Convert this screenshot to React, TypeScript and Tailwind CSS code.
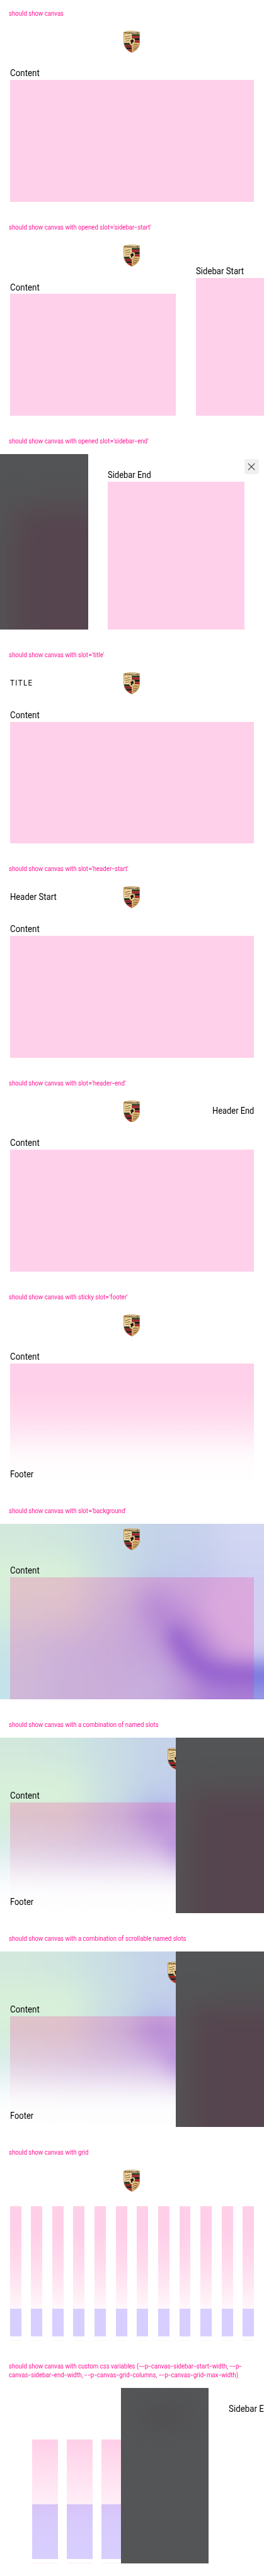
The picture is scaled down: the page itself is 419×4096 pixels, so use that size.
import type { ReactNode } from "react";

function Crest() {
  return (
    <svg viewBox="0 0 30 40" className="block h-[40px] w-[30px] shrink-0" aria-hidden="true">
      <defs>
        <linearGradient id="gold" x1="0" y1="0" x2="1" y2="1">
          <stop offset="0" stopColor="#d9b878" />
          <stop offset=".35" stopColor="#f8dfae" />
          <stop offset=".7" stopColor="#e3b878" />
          <stop offset="1" stopColor="#9a6c34" />
        </linearGradient>
        <clipPath id="shield">
          <path d="M.9 2.9Q15 -1.6 29.1 2.9L28.9 21.5C28.7 29.5 22.5 36.2 15 39.3C7.5 36.2 1.3 29.5 1.1 21.5Z" />
        </clipPath>
      </defs>
      <path d="M0 2.2Q15 -2.2 30 2.2L29.7 21.5C29.5 30.5 23 37 15 40C7 37 .5 30.5 .3 21.5Z" fill="#b08a54" />
      <g clipPath="url(#shield)">
        <rect width="30" height="40" fill="url(#gold)" />
        <rect x="15" y="6.3" width="15" height="3" fill="#233321" />
        <rect x="15" y="9.3" width="15" height="4" fill="#a0262a" />
        <rect x="15" y="13.4" width="15" height="4.2" fill="#1b1c22" />
        <rect x="15" y="17.6" width="15" height="4" fill="#a0262a" />
        <rect x="0" y="22" width="15" height="4.2" fill="#24302a" />
        <rect x="0" y="26.2" width="15" height="3.8" fill="#941f21" />
        <rect x="0" y="30" width="15" height="3.8" fill="#1b1a22" />
        <rect x="0" y="33.8" width="15" height="6" fill="#a8282a" />
        <path d="M15 9.4H30M15 17.6H30M0 26.2H15M0 30H15M15 22V40" stroke="#c9825a" strokeWidth=".35" />
        <g fill="none" stroke="#4a3519" strokeWidth="1">
          <path d="M3 11.2C6 12 9 8.8 13 9.2" />
          <path d="M3.2 15C6 15.8 8.6 12.8 12.4 13.4" />
          <path d="M3.6 19C6 19.6 7.6 17 10.4 17.6" />
          <path d="M17 27.5C19 24.6 22 24.4 25.4 26" />
          <path d="M17 31.5C19 28.6 21.6 28.4 25 30" />
          <path d="M17 35.4C18.6 32.8 20.6 32.2 23.2 33.2" />
        </g>
        <path d="M9.9 14.8Q15.4 12.6 20.6 14.8V20.2C20.4 23.6 18 26 15.3 27C12.5 26 10.1 23.6 9.9 20.2Z" fill="#efcf92" stroke="#a67a40" strokeWidth=".5" />
        <path d="M12.8 23.6L14.2 20.8L12.4 18.6L13 17L14.6 17.6L15 15.6L16.4 15.2L17 17L19 16.4L18 18.4L18.8 20.2L17.2 21.6L16.8 20.4L15.8 22.2L16.4 24.2L14.8 23.2Z" fill="#17130f" />
      </g>
      <text x="2" y="5.6" textLength="26" lengthAdjust="spacingAndGlyphs" fontSize="4.2" fontWeight="600" fontFamily="Roboto, sans-serif" fill="#4a3519">PORSCHE</text>
    </svg>
  );
}

function Text({ children, fit = "origin-left scale-x-[.9]" }: { children: ReactNode; fit?: string }) {
  return <p className={`text-[17px] leading-[24px] whitespace-nowrap text-[#010205] ${fit}`}>{children}</p>;
}

/* Hyphens and equals signs are set wider than the font's own. */
function LabelLine({ text }: { text: string }) {
  return (
    <span className="block">
      {text.split(/([-=])/).map((part, i) => {
        if (part === "-") {
          return <span key={i} className="inline-block w-[5.95px] origin-left scale-x-[1.7]">-</span>;
        }
        if (part === "=") {
          return <span key={i} className="inline-block w-[7.6px] origin-left scale-x-[1.12]">=</span>;
        }
        return part;
      })}
    </span>
  );
}

function Story({ label, children }: { label: string[]; children: ReactNode }) {
  return (
    <section className="pt-[17px] pb-[22px]">
      <h2 className="mb-[15px] ml-[16px] w-[450px] origin-left scale-x-[.922] text-[12px] leading-[16px] whitespace-nowrap text-[#ff1493]">
        {label.map((line) => (
          <LabelLine key={line} text={line} />
        ))}
      </h2>
      <div className="relative flex h-[320px] overflow-hidden">{children}</div>
    </section>
  );
}

function Header({ start, end }: { start?: ReactNode; end?: ReactNode }) {
  return (
    <header className="grid h-[40px] grid-cols-[1fr_30px_1fr] items-center px-[18px]">
      <div className="justify-self-start">{start}</div>
      <Crest />
      <div className="justify-self-end">{end}</div>
    </header>
  );
}

function Fill() {
  return <div className="flex-1 bg-[#ff149333]" />;
}

function Main({ start, end }: { start?: ReactNode; end?: ReactNode }) {
  return (
    <div className="relative flex flex-1 flex-col pt-[8px]">
      <Header start={start} end={end} />
      <div className="flex flex-1 flex-col px-[18px] pt-[26px]">
        <Text>Content</Text>
        <Fill />
      </div>
    </div>
  );
}

function Footer() {
  return (
    <footer className="absolute inset-x-0 bottom-0 flex h-[176px] items-end bg-[linear-gradient(to_bottom,#fff0_0%,#ffffff40_28%,#ffffff80_45%,#ffffffb8_58%,#ffffffe6_71%,#fffffff7_82%,#fff_100%)] px-[18px] pb-[8px]">
      <Text fit="origin-left scale-x-[.87]">Footer</Text>
    </footer>
  );
}

function Backdrop() {
  return (
    <aside className="relative w-[160px] shrink-0 overflow-hidden bg-[#535456]">
      <div className="absolute top-[98px] left-[24px] h-[350px] w-[260px] bg-[#56454e] blur-[26px]" />
    </aside>
  );
}

const MESH = [
  ["#d2e8dd", "#cfe5df", "#c9dde4", "#c4d3e8", "#c7d1ec", "#d2d6f3"],
  ["#d9f2d8", "#d9f2d8", "#cbe0e2", "#c1d0ea", "#c3caee", "#ced2f2"],
  ["#d4eddb", "#d6eadb", "#c3d7e6", "#b7c1ea", "#c4c4ee", "#d2d0f2"],
  ["#c8e3e6", "#c1d8ea", "#bcd0ea", "#b4c3ec", "#a9a8e8", "#d4cef2"],
  ["#c3e2ea", "#bed8ed", "#bed4ec", "#b9d5f2", "#a8aeea", "#9499e6"],
];

function Aurora() {
  return (
    <svg viewBox="0 0 480 320" preserveAspectRatio="none" className="absolute inset-0 h-full w-full" aria-hidden="true">
      <defs>
        <filter id="soft" filterUnits="userSpaceOnUse" x="-160" y="-160" width="800" height="640" colorInterpolationFilters="sRGB">
          <feGaussianBlur stdDeviation="28" />
        </filter>
        <filter id="band" filterUnits="userSpaceOnUse" x="-160" y="-160" width="800" height="640" colorInterpolationFilters="sRGB">
          <feGaussianBlur stdDeviation="15" />
        </filter>
        <filter id="haze" filterUnits="userSpaceOnUse" x="-160" y="-160" width="800" height="640" colorInterpolationFilters="sRGB">
          <feGaussianBlur stdDeviation="24" />
        </filter>
      </defs>
      <g filter="url(#soft)">
        {MESH.map((row, r) =>
          row.map((fill, c) => {
            const left = c === 0 ? -120 : c * 80;
            const right = c === 5 ? 600 : (c + 1) * 80;
            const top = r === 0 ? -120 : r * 64;
            const bottom = r === 4 ? 440 : (r + 1) * 64;
            return <rect key={`${r}-${c}`} x={left} y={top} width={right - left + 1} height={bottom - top + 1} fill={fill} />;
          }),
        )}
      </g>
      <path d="M285 150C310 170 330 205 350 235" fill="none" stroke="#9088e2" strokeWidth="60" strokeLinecap="round" opacity=".5" filter="url(#haze)" />
      <g filter="url(#band)">
        <path d="M345 250C370 285 420 290 560 285V420H400Z" fill="#9599e6" opacity=".85" />
        <path d="M322 192C334 212 342 232 362 246C392 266 430 270 560 264L560 286C440 290 380 290 350 262C332 246 322 222 312 200Z" fill="#7974de" stroke="#7974de" strokeWidth="14" />
        <path d="M370 140C375 190 402 216 430 219C460 221 500 213 560 208V110H400Z" fill="#d3cef1" opacity=".7" />
      </g>
    </svg>
  );
}

function Combination({ label }: { label: string }) {
  return (
    <Story label={[label]}>
      <Aurora />
      <div className="relative flex w-[320px] shrink-0 flex-col overflow-hidden pt-[18px]">
        <div className="pl-[305px]">
          <Crest />
        </div>
        <div className="flex flex-1 flex-col pt-[36px] pl-[18px]">
          <Text>Content</Text>
          <Fill />
        </div>
        <Footer />
      </div>
      <Backdrop />
    </Story>
  );
}

function Tiles({ count, className }: { count: number; className: string }) {
  return Array.from({ length: count }, (_, i) => <div key={i} className={className} />);
}

export default function App() {
  return (
    <main className="w-[480.3px] overflow-hidden bg-white font-['Roboto','Liberation_Sans',sans-serif] [zoom:0.87223]">
      <Story label={["should show canvas"]}>
        <Main />
      </Story>

      <Story label={["should show canvas with opened slot='sidebar-start'"]}>
        <div className="flex w-[320px] shrink-0 flex-col pt-[8px]">
          <div className="pl-[225px]">
            <Crest />
          </div>
          <div className="flex flex-1 flex-col pt-[26px] pl-[18px]">
            <Text>Content</Text>
            <Fill />
          </div>
        </div>
        <div className="flex flex-1 flex-col pt-[44.5px] pl-[36px]">
          <Text fit="origin-left scale-x-[.89]">Sidebar Start</Text>
          <Fill />
        </div>
      </Story>

      <Story label={["should show canvas with opened slot='sidebar-end'"]}>
        <Backdrop />
        <div className="relative flex flex-1 flex-col px-[36px] pt-[26.5px]">
          <Text fit="origin-left scale-x-[.875]">Sidebar End</Text>
          <Fill />
          <button aria-label="Close" className="absolute top-[9px] right-[9px] flex size-[27px] items-center justify-center rounded-[4px] bg-[#f0f0f1]">
            <svg viewBox="0 0 14 14" className="size-[14px]" fill="none" stroke="#2b2c2f" strokeWidth="1.15">
              <path d="M1 1L13 13M13 1L1 13" />
            </svg>
          </button>
        </div>
      </Story>

      <Story label={["should show canvas with slot='title'"]}>
        <Main
          start={
            <p className="origin-left scale-x-[.9] text-[14.5px] leading-[24px] tracking-[1.9px] text-[#010205]">TITLE</p>
          }
        />
      </Story>

      <Story label={["should show canvas with slot='header-start'"]}>
        <Main start={<Text fit="origin-left scale-x-[.886]">Header Start</Text>} />
      </Story>

      <Story label={["should show canvas with slot='header-end'"]}>
        <Main end={<Text fit="origin-right scale-x-[.868]">Header End</Text>} />
      </Story>

      <Story label={["should show canvas with sticky slot='footer'"]}>
        <Main />
        <Footer />
      </Story>

      <Story label={["should show canvas with slot='background'"]}>
        <Aurora />
        <Main />
      </Story>

      <Combination label="should show canvas with a combination of named slots" />
      <Combination label="should show canvas with a combination of scrollable named slots" />

      <Story label={["should show canvas with grid"]}>
        <div className="flex flex-1 flex-col pt-[8px]">
          <Header />
          <div className="mt-[26px] grid h-[187.5px] shrink-0 grid-cols-12 gap-x-[18px] px-[18px]">
            <Tiles count={12} className="bg-[linear-gradient(to_bottom,#ffcfe8_0%,#ffcfe8_24%,#ffdaed_54%,#ffe8f3_78%,#fff7fb_100%)]" />
          </div>
          <div className="grid h-[50px] shrink-0 grid-cols-12 gap-x-[18px] px-[18px]">
            <Tiles count={12} className="bg-[#d8ceff]" />
          </div>
          <div className="mt-[7.2px] grid h-[1.3px] shrink-0 grid-cols-12 gap-x-[18px] px-[18px]">
            <Tiles count={12} className="bg-[#fdf1f6]" />
          </div>
        </div>
      </Story>

      <Story
        label={[
          "should show canvas with custom css variables (--p-canvas-sidebar-start-width, --p-",
          "canvas-sidebar-end-width, --p-canvas-grid-columns, --p-canvas-grid-max-width)",
        ]}
      >
        <div className="w-[220px] shrink-0 overflow-hidden pt-[94px] pl-[58px]">
          <div className="grid h-[117.6px] grid-cols-[repeat(3,47.3px)] gap-x-[16px]">
            <Tiles count={3} className="bg-[linear-gradient(to_bottom,#ffcfe8_0%,#ffd8ec_28%,#ffe2f1_60%,#ffeef7_100%)]" />
          </div>
          <div className="grid h-[99.7px] grid-cols-[repeat(3,47.3px)] gap-x-[16px]">
            <Tiles count={3} className="bg-[linear-gradient(to_bottom,#d7c4f8_0%,#d8cbfc_35%,#d8cfff_100%)]" />
          </div>
          <div className="mt-[7.4px] grid h-[1.3px] grid-cols-[repeat(3,47.3px)] gap-x-[16px]">
            <Tiles count={3} className="bg-[#fdecf3]" />
          </div>
        </div>
        <div className="relative w-[160px] shrink-0 overflow-hidden bg-[#545557]">
          <div className="absolute top-[26px] left-[35px] h-[50px] w-[95px] rounded-full bg-[#515153] blur-[16px]" />
        </div>
        <div className="flex-1 overflow-hidden pt-[26.5px] pl-[36.5px]">
          <Text fit="origin-left scale-x-[.9]">Sidebar End</Text>
        </div>
      </Story>
    </main>
  );
}
